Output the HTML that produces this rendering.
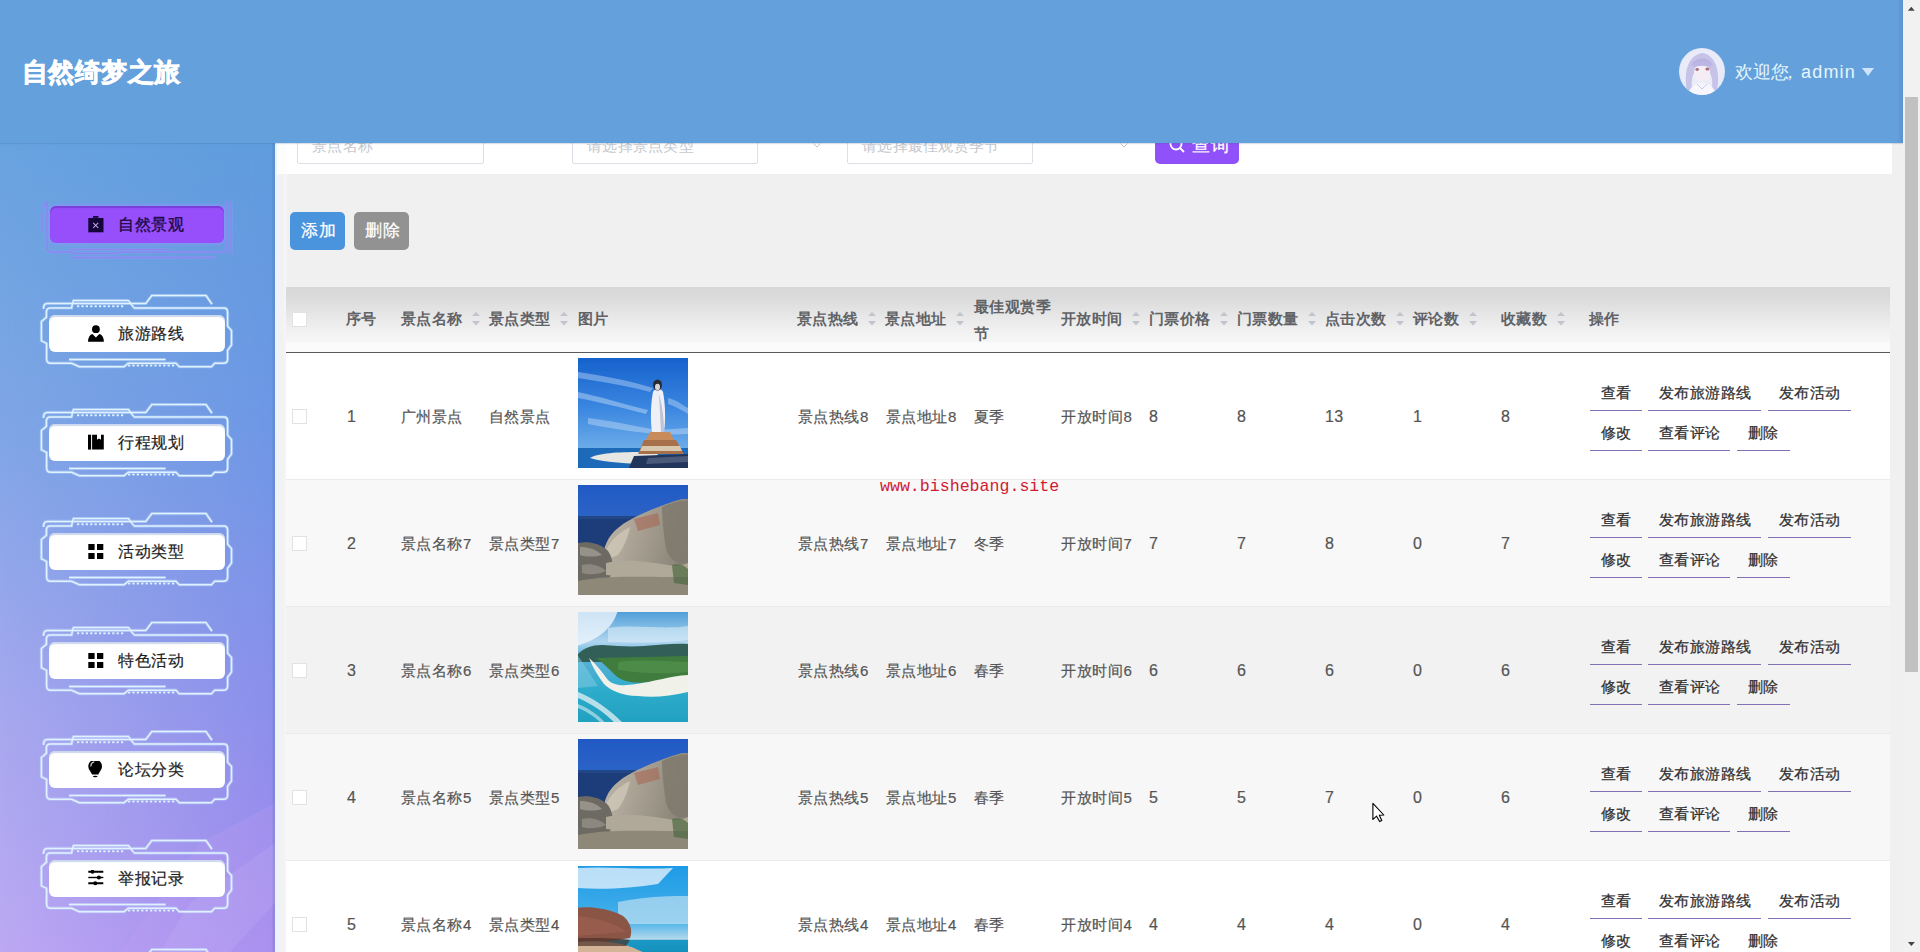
<!DOCTYPE html><html><head><meta charset="utf-8"><style>
*{box-sizing:border-box;margin:0;padding:0}
html,body{width:1920px;height:952px;overflow:hidden;background:#f0f0f0;font-family:"Liberation Sans",sans-serif}
.a{position:absolute}
#hdr{position:absolute;left:0;top:0;width:1903px;height:143px;background:#64a0dc;z-index:10;box-shadow:0 1px 1px rgba(60,100,150,.2)}
#title{position:absolute;left:22px;top:54px;font-size:26px;font-weight:700;-webkit-text-stroke:0.7px #fff;letter-spacing:0.4px;color:#fff;line-height:36px;white-space:nowrap}
#user{position:absolute;left:1735px;top:59px;font-size:18px;color:#e4f6fb;line-height:26px;white-space:nowrap}
#sb{position:absolute;left:1903px;top:0;width:17px;height:952px;background:#f1f1f1;z-index:11}
#side{position:absolute;left:0;top:143px;width:275px;height:809px;overflow:hidden}
#main{position:absolute;left:275px;top:143px;width:1628px;height:809px;background:#f0f0f0;overflow:hidden}
.c{position:absolute;font-size:15px;letter-spacing:0.6px;color:#555;white-space:nowrap;line-height:20px;-webkit-text-stroke:0.2px #555}
.h{position:absolute;font-size:15px;letter-spacing:0.4px;color:#606266;font-weight:bold;white-space:nowrap;line-height:20px}
.cb{position:absolute;width:15px;height:15px;border:1px solid #e2e2e2;background:#fff;border-radius:0}
.bt{position:absolute;font-size:15px;letter-spacing:0.4px;color:#303030;line-height:20px;white-space:nowrap;-webkit-text-stroke:0.25px #303030}
.ul{position:absolute;height:1.3px;background:#8370b4}
.mt{position:absolute;font-size:16px;letter-spacing:0.5px;color:#1e1e1e;line-height:22px;white-space:nowrap;-webkit-text-stroke:0.2px #1e1e1e}
</style></head><body>
<div id="hdr"><div class="a" style="left:1897px;top:0;width:6px;height:143px;background:linear-gradient(90deg,rgba(60,100,160,0),rgba(60,100,160,.22))"></div><div id="title">自然绮梦之旅</div>
<svg class="a" style="left:1679px;top:48px" width="46" height="47" viewBox="0 0 46 47">
<defs><clipPath id="avc"><ellipse cx="23" cy="23.5" rx="23" ry="23.5"/></clipPath>
<radialGradient id="avg" cx="50%" cy="45%" r="55%"><stop offset="0" stop-color="#f2f0fa"/><stop offset="0.85" stop-color="#e8eaf8"/><stop offset="1" stop-color="#dce8fa"/></radialGradient></defs>
<g clip-path="url(#avc)">
<rect width="46" height="47" fill="url(#avg)"/>
<path d="M8,42 C5,28 7,8 23,5 C39,7 41,28 38,42 L33,42 C34,32 33,22 23,18 C13,22 12,32 13,42Z" fill="#c6c2e8"/>
<path d="M12,18 C15,8 31,8 34,18 C30,14 16,14 12,18Z" fill="#b8b4e0"/>
<ellipse cx="23" cy="24" rx="8" ry="9.5" fill="#f4eef4"/>
<path d="M14,16 C18,13 28,13 32,17 L31,20 C27,17 19,17 15,20Z" fill="#bcb6e4"/>
<ellipse cx="18.2" cy="21.5" rx="1.8" ry="1.4" fill="#a87080"/><ellipse cx="28.4" cy="21" rx="2" ry="1.5" fill="#b06878"/>
<path d="M9,47 C11,38 17,35 23,35 C29,35 35,38 37,47Z" fill="#f6f6fc"/>
<path d="M18,36 L23,41 L28,36" stroke="#c8c4e6" stroke-width="0.9" fill="none"/>
</g></svg>
<div id="user">欢迎您</div><div id="user" style="left:1781px">，</div><div id="user" style="left:1801px;letter-spacing:1.2px">admin</div>
<svg class="a" style="left:1862px;top:68px" width="12" height="8"><path d="M0,0 L12,0 L6,8Z" fill="#cfe3fb"/></svg>
</div>
<div id="sb"><svg class="a" style="left:0;top:0" width="17" height="952"><path d="M4.9,10.8 L11.7,10.8 L8.3,6.8Z" fill="#454545"/><path d="M4.9,942 L11.9,942 L8.4,946Z" fill="#454545"/><rect x="2" y="97" width="13" height="575" fill="#c1c1c1"/></svg></div>
<div id="side">
<svg class="a" style="left:0;top:0" width="275" height="809">
<defs>
<linearGradient id="sgl" x1="0" y1="0" x2="0" y2="1">
<stop offset="0" stop-color="#68a3e0"/>
<stop offset="0.35" stop-color="#7fa6e6"/>
<stop offset="0.7" stop-color="#a6a8ee"/>
<stop offset="1" stop-color="#bca9f3"/>
</linearGradient>
<linearGradient id="sgr" x1="0" y1="0" x2="0" y2="1">
<stop offset="0" stop-color="#5f9cdd"/>
<stop offset="0.35" stop-color="#6e97e4"/>
<stop offset="0.7" stop-color="#8b8fea"/>
<stop offset="1" stop-color="#a48aee"/>
</linearGradient>
<linearGradient id="sgm" x1="0" y1="0" x2="1" y2="0">
<stop offset="0" stop-color="#fff" stop-opacity="0"/>
<stop offset="1" stop-color="#fff" stop-opacity="1"/>
</linearGradient>
<mask id="smask"><rect width="275" height="809" fill="url(#sgm)"/></mask>
</defs>
<rect width="275" height="809" fill="url(#sgl)"/>
<rect width="275" height="809" fill="url(#sgr)" mask="url(#smask)"/>
<path d="M120,809 L200,700 L275,660 L275,809Z" fill="#c0a0f4" opacity="0.25"/>
<rect x="272.5" y="0" width="2.5" height="809" fill="#3a5a90" opacity="0.16"/>
<path d="M190,760 L275,700 L275,760 L230,809 L160,809Z" fill="#ffffff" opacity="0.07"/>
</svg>
<svg class="a" style="left:38px;top:38.0px" width="200" height="82" viewBox="0 0 200 82" fill="none"><g stroke="#8f9cf6" stroke-width="3.2" opacity="0.45"><path d="M9,20 L9,66 Q9,71 14,71 L34,71 L36,72.5 L80,72.5 L82,71 L184,71 Q188.8,71 188.8,66 L188.8,20" /><path d="M3.9,32 L3.9,51 M3.5,27.5 L9,21.5" /><path d="M193.2,20 L193.2,74" /><path d="M34,76.5 L178,76.5" /><path d="M31,68.4 L130,68.4" /></g><g stroke="#8a86f2" stroke-width="1.4"><path d="M9,20 L9,66 Q9,71 14,71 L34,71 L36,72.5 L80,72.5 L82,71 L184,71 Q188.8,71 188.8,66 L188.8,20" /><path d="M3.9,32 L3.9,51 M3.5,27.5 L9,21.5" /><path d="M193.2,20 L193.2,74" /><path d="M34,76.5 L178,76.5" /><path d="M31,68.4 L130,68.4" /></g></svg>
<div class="a" style="left:50px;top:63.0px;width:174px;height:37px;background:#964ffa;border-radius:6px;box-shadow:inset 0 2px 1px #7a3ed8,0 0 3px 2px rgba(135,150,245,.75)"></div>
<svg class="a" style="left:88px;top:73.0px" width="16" height="17" viewBox="0 0 16 17"><path d="M5,-0.2 L10.4,-0.2 L10.4,1.8 L5,1.8Z" fill="#15063a"/><path d="M0.3,2 L15.5,2 L15.5,16.3 L0.3,16.3Z" fill="#15063a"/><path d="M5.2,6.8 L10.2,11.8 M10.2,6.8 L5.2,11.8" stroke="#b8a0e8" stroke-width="1.1"/></svg>
<div class="mt" style="left:118px;top:70.5px;color:#1c0845;-webkit-text-stroke:0.35px #1c0845">自然景观</div>
<svg class="a" style="left:38px;top:147.0px" width="200" height="82" viewBox="0 0 200 82" fill="none"><g stroke="#c8e6ff" stroke-width="3.2" opacity="0.35"><path d="M5.5,19 Q5.5,13.4 9.2,13.4 L107.8,13.4 L113.8,5.6 L168,5.6 L174,14.2" /><path d="M34.5,13.4 L35.5,10.6 L90.4,10.6 L95.6,17.4" /><path d="M34.5,13.4 L33.6,18 L12.4,18 Q8.4,18 8.4,22 L8.4,27.3 L3.4,31.5 L3.4,50.8 L8.6,53.4 L8.6,68.9 Q8.6,73.2 12.9,73.2 L33.6,73.2 L41.3,76.7 L86.1,76.7 L90.4,73.2 L137.9,73.2 L141.3,76.7 L173.5,76.7 L176.7,73.2 L185.3,73.2 Q189.6,73.2 189.6,68.9 L189.6,60.3 L193.5,55 L193.5,40.5 L189.6,36.2 L189.6,22.4 Q189.6,18.1 186,18.1 L96.5,18.1 L95.6,17.4" /><path d="M31,69.5 L127.6,69.5" /><path d="M39,16.2 L85.3,16.2" stroke-dasharray="2.2 2.2" /><path d="M90,75.4 L137,75.4" stroke-dasharray="2.2 2.2" /></g><g stroke="#e0f2ff" stroke-width="1.5"><path d="M5.5,19 Q5.5,13.4 9.2,13.4 L107.8,13.4 L113.8,5.6 L168,5.6 L174,14.2" /><path d="M34.5,13.4 L35.5,10.6 L90.4,10.6 L95.6,17.4" /><path d="M34.5,13.4 L33.6,18 L12.4,18 Q8.4,18 8.4,22 L8.4,27.3 L3.4,31.5 L3.4,50.8 L8.6,53.4 L8.6,68.9 Q8.6,73.2 12.9,73.2 L33.6,73.2 L41.3,76.7 L86.1,76.7 L90.4,73.2 L137.9,73.2 L141.3,76.7 L173.5,76.7 L176.7,73.2 L185.3,73.2 Q189.6,73.2 189.6,68.9 L189.6,60.3 L193.5,55 L193.5,40.5 L189.6,36.2 L189.6,22.4 Q189.6,18.1 186,18.1 L96.5,18.1 L95.6,17.4" /><path d="M31,69.5 L127.6,69.5" /><path d="M39,16.2 L85.3,16.2" stroke-dasharray="2.2 2.2" /><path d="M90,75.4 L137,75.4" stroke-dasharray="2.2 2.2" /></g></svg>
<div class="a" style="left:49px;top:172.0px;width:176px;height:37px;background:#fff;border-radius:6px;box-shadow:inset 0 2px 1px rgba(170,190,225,.6)"></div>
<svg class="a" style="left:88px;top:182.0px" width="16" height="17" viewBox="0 0 16 17"><circle cx="7.9" cy="4.2" r="3.9" fill="#000"/><path d="M0,16.7 Q0.3,10 4.5,9 L7.9,12.5 L11.3,9 Q15.6,10 15.9,16.7Z" fill="#000"/></svg>
<div class="mt" style="left:118px;top:179.5px">旅游路线</div>
<svg class="a" style="left:38px;top:256.0px" width="200" height="82" viewBox="0 0 200 82" fill="none"><g stroke="#c8e6ff" stroke-width="3.2" opacity="0.35"><path d="M5.5,19 Q5.5,13.4 9.2,13.4 L107.8,13.4 L113.8,5.6 L168,5.6 L174,14.2" /><path d="M34.5,13.4 L35.5,10.6 L90.4,10.6 L95.6,17.4" /><path d="M34.5,13.4 L33.6,18 L12.4,18 Q8.4,18 8.4,22 L8.4,27.3 L3.4,31.5 L3.4,50.8 L8.6,53.4 L8.6,68.9 Q8.6,73.2 12.9,73.2 L33.6,73.2 L41.3,76.7 L86.1,76.7 L90.4,73.2 L137.9,73.2 L141.3,76.7 L173.5,76.7 L176.7,73.2 L185.3,73.2 Q189.6,73.2 189.6,68.9 L189.6,60.3 L193.5,55 L193.5,40.5 L189.6,36.2 L189.6,22.4 Q189.6,18.1 186,18.1 L96.5,18.1 L95.6,17.4" /><path d="M31,69.5 L127.6,69.5" /><path d="M39,16.2 L85.3,16.2" stroke-dasharray="2.2 2.2" /><path d="M90,75.4 L137,75.4" stroke-dasharray="2.2 2.2" /></g><g stroke="#e0f2ff" stroke-width="1.5"><path d="M5.5,19 Q5.5,13.4 9.2,13.4 L107.8,13.4 L113.8,5.6 L168,5.6 L174,14.2" /><path d="M34.5,13.4 L35.5,10.6 L90.4,10.6 L95.6,17.4" /><path d="M34.5,13.4 L33.6,18 L12.4,18 Q8.4,18 8.4,22 L8.4,27.3 L3.4,31.5 L3.4,50.8 L8.6,53.4 L8.6,68.9 Q8.6,73.2 12.9,73.2 L33.6,73.2 L41.3,76.7 L86.1,76.7 L90.4,73.2 L137.9,73.2 L141.3,76.7 L173.5,76.7 L176.7,73.2 L185.3,73.2 Q189.6,73.2 189.6,68.9 L189.6,60.3 L193.5,55 L193.5,40.5 L189.6,36.2 L189.6,22.4 Q189.6,18.1 186,18.1 L96.5,18.1 L95.6,17.4" /><path d="M31,69.5 L127.6,69.5" /><path d="M39,16.2 L85.3,16.2" stroke-dasharray="2.2 2.2" /><path d="M90,75.4 L137,75.4" stroke-dasharray="2.2 2.2" /></g></svg>
<div class="a" style="left:49px;top:281.0px;width:176px;height:37px;background:#fff;border-radius:6px;box-shadow:inset 0 2px 1px rgba(170,190,225,.6)"></div>
<svg class="a" style="left:88px;top:291.0px" width="16" height="17" viewBox="0 0 16 17"><path d="M0,0.7 L3.1,0.7 L3.1,15.6 L0,15.6Z" fill="#000"/><path d="M4.1,0.7 L9,0.7 L9,5.7 L11,4.6 L13,5.7 L13,0.7 L15.8,0.7 L15.8,15.6 L4.1,15.6Z" fill="#000"/></svg>
<div class="mt" style="left:118px;top:288.5px">行程规划</div>
<svg class="a" style="left:38px;top:365.0px" width="200" height="82" viewBox="0 0 200 82" fill="none"><g stroke="#c8e6ff" stroke-width="3.2" opacity="0.35"><path d="M5.5,19 Q5.5,13.4 9.2,13.4 L107.8,13.4 L113.8,5.6 L168,5.6 L174,14.2" /><path d="M34.5,13.4 L35.5,10.6 L90.4,10.6 L95.6,17.4" /><path d="M34.5,13.4 L33.6,18 L12.4,18 Q8.4,18 8.4,22 L8.4,27.3 L3.4,31.5 L3.4,50.8 L8.6,53.4 L8.6,68.9 Q8.6,73.2 12.9,73.2 L33.6,73.2 L41.3,76.7 L86.1,76.7 L90.4,73.2 L137.9,73.2 L141.3,76.7 L173.5,76.7 L176.7,73.2 L185.3,73.2 Q189.6,73.2 189.6,68.9 L189.6,60.3 L193.5,55 L193.5,40.5 L189.6,36.2 L189.6,22.4 Q189.6,18.1 186,18.1 L96.5,18.1 L95.6,17.4" /><path d="M31,69.5 L127.6,69.5" /><path d="M39,16.2 L85.3,16.2" stroke-dasharray="2.2 2.2" /><path d="M90,75.4 L137,75.4" stroke-dasharray="2.2 2.2" /></g><g stroke="#e0f2ff" stroke-width="1.5"><path d="M5.5,19 Q5.5,13.4 9.2,13.4 L107.8,13.4 L113.8,5.6 L168,5.6 L174,14.2" /><path d="M34.5,13.4 L35.5,10.6 L90.4,10.6 L95.6,17.4" /><path d="M34.5,13.4 L33.6,18 L12.4,18 Q8.4,18 8.4,22 L8.4,27.3 L3.4,31.5 L3.4,50.8 L8.6,53.4 L8.6,68.9 Q8.6,73.2 12.9,73.2 L33.6,73.2 L41.3,76.7 L86.1,76.7 L90.4,73.2 L137.9,73.2 L141.3,76.7 L173.5,76.7 L176.7,73.2 L185.3,73.2 Q189.6,73.2 189.6,68.9 L189.6,60.3 L193.5,55 L193.5,40.5 L189.6,36.2 L189.6,22.4 Q189.6,18.1 186,18.1 L96.5,18.1 L95.6,17.4" /><path d="M31,69.5 L127.6,69.5" /><path d="M39,16.2 L85.3,16.2" stroke-dasharray="2.2 2.2" /><path d="M90,75.4 L137,75.4" stroke-dasharray="2.2 2.2" /></g></svg>
<div class="a" style="left:49px;top:390.0px;width:176px;height:37px;background:#fff;border-radius:6px;box-shadow:inset 0 2px 1px rgba(170,190,225,.6)"></div>
<svg class="a" style="left:88px;top:400.0px" width="16" height="17" viewBox="0 0 16 17"><rect x="0.3" y="1" width="6.3" height="6" fill="#000"/><rect x="9" y="1" width="6.3" height="6" fill="#000"/><rect x="0.3" y="10" width="6.3" height="6" fill="#000"/><rect x="9" y="10" width="6.3" height="6" fill="#000"/></svg>
<div class="mt" style="left:118px;top:397.5px">活动类型</div>
<svg class="a" style="left:38px;top:474.0px" width="200" height="82" viewBox="0 0 200 82" fill="none"><g stroke="#c8e6ff" stroke-width="3.2" opacity="0.35"><path d="M5.5,19 Q5.5,13.4 9.2,13.4 L107.8,13.4 L113.8,5.6 L168,5.6 L174,14.2" /><path d="M34.5,13.4 L35.5,10.6 L90.4,10.6 L95.6,17.4" /><path d="M34.5,13.4 L33.6,18 L12.4,18 Q8.4,18 8.4,22 L8.4,27.3 L3.4,31.5 L3.4,50.8 L8.6,53.4 L8.6,68.9 Q8.6,73.2 12.9,73.2 L33.6,73.2 L41.3,76.7 L86.1,76.7 L90.4,73.2 L137.9,73.2 L141.3,76.7 L173.5,76.7 L176.7,73.2 L185.3,73.2 Q189.6,73.2 189.6,68.9 L189.6,60.3 L193.5,55 L193.5,40.5 L189.6,36.2 L189.6,22.4 Q189.6,18.1 186,18.1 L96.5,18.1 L95.6,17.4" /><path d="M31,69.5 L127.6,69.5" /><path d="M39,16.2 L85.3,16.2" stroke-dasharray="2.2 2.2" /><path d="M90,75.4 L137,75.4" stroke-dasharray="2.2 2.2" /></g><g stroke="#e0f2ff" stroke-width="1.5"><path d="M5.5,19 Q5.5,13.4 9.2,13.4 L107.8,13.4 L113.8,5.6 L168,5.6 L174,14.2" /><path d="M34.5,13.4 L35.5,10.6 L90.4,10.6 L95.6,17.4" /><path d="M34.5,13.4 L33.6,18 L12.4,18 Q8.4,18 8.4,22 L8.4,27.3 L3.4,31.5 L3.4,50.8 L8.6,53.4 L8.6,68.9 Q8.6,73.2 12.9,73.2 L33.6,73.2 L41.3,76.7 L86.1,76.7 L90.4,73.2 L137.9,73.2 L141.3,76.7 L173.5,76.7 L176.7,73.2 L185.3,73.2 Q189.6,73.2 189.6,68.9 L189.6,60.3 L193.5,55 L193.5,40.5 L189.6,36.2 L189.6,22.4 Q189.6,18.1 186,18.1 L96.5,18.1 L95.6,17.4" /><path d="M31,69.5 L127.6,69.5" /><path d="M39,16.2 L85.3,16.2" stroke-dasharray="2.2 2.2" /><path d="M90,75.4 L137,75.4" stroke-dasharray="2.2 2.2" /></g></svg>
<div class="a" style="left:49px;top:499.0px;width:176px;height:37px;background:#fff;border-radius:6px;box-shadow:inset 0 2px 1px rgba(170,190,225,.6)"></div>
<svg class="a" style="left:88px;top:509.0px" width="16" height="17" viewBox="0 0 16 17"><rect x="0.3" y="1" width="6.3" height="6" fill="#000"/><rect x="9" y="1" width="6.3" height="6" fill="#000"/><rect x="0.3" y="10" width="6.3" height="6" fill="#000"/><rect x="9" y="10" width="6.3" height="6" fill="#000"/></svg>
<div class="mt" style="left:118px;top:506.5px">特色活动</div>
<svg class="a" style="left:38px;top:583.0px" width="200" height="82" viewBox="0 0 200 82" fill="none"><g stroke="#c8e6ff" stroke-width="3.2" opacity="0.35"><path d="M5.5,19 Q5.5,13.4 9.2,13.4 L107.8,13.4 L113.8,5.6 L168,5.6 L174,14.2" /><path d="M34.5,13.4 L35.5,10.6 L90.4,10.6 L95.6,17.4" /><path d="M34.5,13.4 L33.6,18 L12.4,18 Q8.4,18 8.4,22 L8.4,27.3 L3.4,31.5 L3.4,50.8 L8.6,53.4 L8.6,68.9 Q8.6,73.2 12.9,73.2 L33.6,73.2 L41.3,76.7 L86.1,76.7 L90.4,73.2 L137.9,73.2 L141.3,76.7 L173.5,76.7 L176.7,73.2 L185.3,73.2 Q189.6,73.2 189.6,68.9 L189.6,60.3 L193.5,55 L193.5,40.5 L189.6,36.2 L189.6,22.4 Q189.6,18.1 186,18.1 L96.5,18.1 L95.6,17.4" /><path d="M31,69.5 L127.6,69.5" /><path d="M39,16.2 L85.3,16.2" stroke-dasharray="2.2 2.2" /><path d="M90,75.4 L137,75.4" stroke-dasharray="2.2 2.2" /></g><g stroke="#e0f2ff" stroke-width="1.5"><path d="M5.5,19 Q5.5,13.4 9.2,13.4 L107.8,13.4 L113.8,5.6 L168,5.6 L174,14.2" /><path d="M34.5,13.4 L35.5,10.6 L90.4,10.6 L95.6,17.4" /><path d="M34.5,13.4 L33.6,18 L12.4,18 Q8.4,18 8.4,22 L8.4,27.3 L3.4,31.5 L3.4,50.8 L8.6,53.4 L8.6,68.9 Q8.6,73.2 12.9,73.2 L33.6,73.2 L41.3,76.7 L86.1,76.7 L90.4,73.2 L137.9,73.2 L141.3,76.7 L173.5,76.7 L176.7,73.2 L185.3,73.2 Q189.6,73.2 189.6,68.9 L189.6,60.3 L193.5,55 L193.5,40.5 L189.6,36.2 L189.6,22.4 Q189.6,18.1 186,18.1 L96.5,18.1 L95.6,17.4" /><path d="M31,69.5 L127.6,69.5" /><path d="M39,16.2 L85.3,16.2" stroke-dasharray="2.2 2.2" /><path d="M90,75.4 L137,75.4" stroke-dasharray="2.2 2.2" /></g></svg>
<div class="a" style="left:49px;top:608.0px;width:176px;height:37px;background:#fff;border-radius:6px;box-shadow:inset 0 2px 1px rgba(170,190,225,.6)"></div>
<svg class="a" style="left:88px;top:618.0px" width="16" height="17" viewBox="0 0 16 17"><path d="M7.2,-1.3 C11.2,-1.3 14,1.5 14,5.5 C14,8.8 11.5,10.5 10.3,13.6 L4.1,13.6 C2.9,10.5 0.3,8.8 0.3,5.5 C0.3,1.5 3.2,-1.3 7.2,-1.3Z" fill="#000"/><path d="M2.8,5.5 C2.8,3 4.3,1.2 6.3,0.8" stroke="#d8d8d8" stroke-width="1.2" fill="none"/><ellipse cx="7.2" cy="15.5" rx="2.3" ry="0.8" fill="#000"/></svg>
<div class="mt" style="left:118px;top:615.5px">论坛分类</div>
<svg class="a" style="left:38px;top:692.0px" width="200" height="82" viewBox="0 0 200 82" fill="none"><g stroke="#c8e6ff" stroke-width="3.2" opacity="0.35"><path d="M5.5,19 Q5.5,13.4 9.2,13.4 L107.8,13.4 L113.8,5.6 L168,5.6 L174,14.2" /><path d="M34.5,13.4 L35.5,10.6 L90.4,10.6 L95.6,17.4" /><path d="M34.5,13.4 L33.6,18 L12.4,18 Q8.4,18 8.4,22 L8.4,27.3 L3.4,31.5 L3.4,50.8 L8.6,53.4 L8.6,68.9 Q8.6,73.2 12.9,73.2 L33.6,73.2 L41.3,76.7 L86.1,76.7 L90.4,73.2 L137.9,73.2 L141.3,76.7 L173.5,76.7 L176.7,73.2 L185.3,73.2 Q189.6,73.2 189.6,68.9 L189.6,60.3 L193.5,55 L193.5,40.5 L189.6,36.2 L189.6,22.4 Q189.6,18.1 186,18.1 L96.5,18.1 L95.6,17.4" /><path d="M31,69.5 L127.6,69.5" /><path d="M39,16.2 L85.3,16.2" stroke-dasharray="2.2 2.2" /><path d="M90,75.4 L137,75.4" stroke-dasharray="2.2 2.2" /></g><g stroke="#e0f2ff" stroke-width="1.5"><path d="M5.5,19 Q5.5,13.4 9.2,13.4 L107.8,13.4 L113.8,5.6 L168,5.6 L174,14.2" /><path d="M34.5,13.4 L35.5,10.6 L90.4,10.6 L95.6,17.4" /><path d="M34.5,13.4 L33.6,18 L12.4,18 Q8.4,18 8.4,22 L8.4,27.3 L3.4,31.5 L3.4,50.8 L8.6,53.4 L8.6,68.9 Q8.6,73.2 12.9,73.2 L33.6,73.2 L41.3,76.7 L86.1,76.7 L90.4,73.2 L137.9,73.2 L141.3,76.7 L173.5,76.7 L176.7,73.2 L185.3,73.2 Q189.6,73.2 189.6,68.9 L189.6,60.3 L193.5,55 L193.5,40.5 L189.6,36.2 L189.6,22.4 Q189.6,18.1 186,18.1 L96.5,18.1 L95.6,17.4" /><path d="M31,69.5 L127.6,69.5" /><path d="M39,16.2 L85.3,16.2" stroke-dasharray="2.2 2.2" /><path d="M90,75.4 L137,75.4" stroke-dasharray="2.2 2.2" /></g></svg>
<div class="a" style="left:49px;top:717.0px;width:176px;height:37px;background:#fff;border-radius:6px;box-shadow:inset 0 2px 1px rgba(170,190,225,.6)"></div>
<svg class="a" style="left:88px;top:727.0px" width="16" height="17" viewBox="0 0 16 17"><path d="M0.3,1.8 L15.3,1.8 M0.3,13.2 L15.3,13.2" stroke="#000" stroke-width="1.9"/><path d="M0.3,7.5 L15.3,7.5" stroke="#000" stroke-width="1.4"/><circle cx="4.5" cy="1.8" r="2" fill="#000"/><circle cx="10.9" cy="7.5" r="2" fill="#000"/><circle cx="7.3" cy="13.2" r="2" fill="#000"/></svg>
<div class="mt" style="left:118px;top:724.5px">举报记录</div>
<svg class="a" style="left:38px;top:801.0px" width="200" height="82" viewBox="0 0 200 82" fill="none"><g stroke="#c8e6ff" stroke-width="3.2" opacity="0.35"><path d="M5.5,19 Q5.5,13.4 9.2,13.4 L107.8,13.4 L113.8,5.6 L168,5.6 L174,14.2" /><path d="M34.5,13.4 L35.5,10.6 L90.4,10.6 L95.6,17.4" /><path d="M34.5,13.4 L33.6,18 L12.4,18 Q8.4,18 8.4,22 L8.4,27.3 L3.4,31.5 L3.4,50.8 L8.6,53.4 L8.6,68.9 Q8.6,73.2 12.9,73.2 L33.6,73.2 L41.3,76.7 L86.1,76.7 L90.4,73.2 L137.9,73.2 L141.3,76.7 L173.5,76.7 L176.7,73.2 L185.3,73.2 Q189.6,73.2 189.6,68.9 L189.6,60.3 L193.5,55 L193.5,40.5 L189.6,36.2 L189.6,22.4 Q189.6,18.1 186,18.1 L96.5,18.1 L95.6,17.4" /><path d="M31,69.5 L127.6,69.5" /><path d="M39,16.2 L85.3,16.2" stroke-dasharray="2.2 2.2" /><path d="M90,75.4 L137,75.4" stroke-dasharray="2.2 2.2" /></g><g stroke="#e0f2ff" stroke-width="1.5"><path d="M5.5,19 Q5.5,13.4 9.2,13.4 L107.8,13.4 L113.8,5.6 L168,5.6 L174,14.2" /><path d="M34.5,13.4 L35.5,10.6 L90.4,10.6 L95.6,17.4" /><path d="M34.5,13.4 L33.6,18 L12.4,18 Q8.4,18 8.4,22 L8.4,27.3 L3.4,31.5 L3.4,50.8 L8.6,53.4 L8.6,68.9 Q8.6,73.2 12.9,73.2 L33.6,73.2 L41.3,76.7 L86.1,76.7 L90.4,73.2 L137.9,73.2 L141.3,76.7 L173.5,76.7 L176.7,73.2 L185.3,73.2 Q189.6,73.2 189.6,68.9 L189.6,60.3 L193.5,55 L193.5,40.5 L189.6,36.2 L189.6,22.4 Q189.6,18.1 186,18.1 L96.5,18.1 L95.6,17.4" /><path d="M31,69.5 L127.6,69.5" /><path d="M39,16.2 L85.3,16.2" stroke-dasharray="2.2 2.2" /><path d="M90,75.4 L137,75.4" stroke-dasharray="2.2 2.2" /></g></svg>
<div class="a" style="left:49px;top:826.0px;width:176px;height:37px;background:#fff;border-radius:6px;box-shadow:inset 0 2px 1px rgba(170,190,225,.6)"></div>
<svg class="a" style="left:88px;top:836.0px" width="16" height="17" viewBox="0 0 16 17"><rect x="0.3" y="1" width="6.3" height="6" fill="#000"/><rect x="9" y="1" width="6.3" height="6" fill="#000"/><rect x="0.3" y="10" width="6.3" height="6" fill="#000"/><rect x="9" y="10" width="6.3" height="6" fill="#000"/></svg>
<div class="mt" style="left:118px;top:833.5px">景点热线</div>
</div>
<div id="main">
<div class="a" style="left:0;top:0;width:12px;height:809px;background:linear-gradient(90deg,#f0f2f6,#f2f2f4 60%,#f6f6f7)"></div>
<div class="a" style="left:0;top:0;width:12px;height:31px;background:#fdfdfe"></div>
<div class="a" style="left:0;top:0;width:1.5px;height:809px;background:#eaf4ff"></div>
<div class="a" style="left:12px;top:0;width:1605px;height:31px;background:#fff"></div>
<div class="a" style="left:22px;top:-20px;width:187px;height:41px;border:1px solid #dcdfe6;border-radius:2px"></div>
<div class="c" style="left:37px;top:-7px;color:#c4c8ce;-webkit-text-stroke:0;letter-spacing:0.3px">景点名称</div>
<div class="a" style="left:297px;top:-20px;width:186px;height:41px;border:1px solid #dcdfe6;border-radius:2px"></div>
<div class="c" style="left:312px;top:-7px;color:#c4c8ce;-webkit-text-stroke:0;letter-spacing:0.3px">请选择景点类型</div>
<div class="a" style="left:572px;top:-20px;width:186px;height:41px;border:1px solid #dcdfe6;border-radius:2px"></div>
<div class="c" style="left:587px;top:-7px;color:#c4c8ce;-webkit-text-stroke:0;letter-spacing:0.3px">请选择最佳观赏季节</div>
<svg class="a" style="left:538px;top:0px" width="8" height="5"><path d="M0.5,0.5 L4,4 L7.5,0.5" stroke="#c0c4cc" stroke-width="1" fill="none"/></svg>
<svg class="a" style="left:845px;top:0px" width="8" height="5"><path d="M0.5,0.5 L4,4 L7.5,0.5" stroke="#c0c4cc" stroke-width="1" fill="none"/></svg>
<div class="a" style="left:880px;top:-20px;width:84px;height:41px;background:#9050fa;border-radius:5px"></div>
<svg class="a" style="left:894px;top:-6px" width="17" height="16" viewBox="0 0 17 16"><circle cx="7" cy="7" r="5.5" stroke="#fff" stroke-width="1.8" fill="none"/><path d="M11,11 L15,15" stroke="#fff" stroke-width="1.8"/></svg>
<div class="c" style="left:917px;top:-9px;color:#fff;font-size:17.5px;line-height:22px;-webkit-text-stroke:0.3px #fff">查询</div>
<div class="a" style="left:15px;top:69px;width:55px;height:38px;background:#4a93dd;border-radius:5px"></div>
<div class="c" style="left:26px;top:76px;color:#fff;font-size:17px;line-height:24px;-webkit-text-stroke:0.25px #fff">添加</div>
<div class="a" style="left:79px;top:69px;width:55px;height:38px;background:#929292;border-radius:5px"></div>
<div class="c" style="left:90px;top:76px;color:#fff;font-size:17px;line-height:24px;-webkit-text-stroke:0.25px #fff">删除</div>
<div class="a" style="left:11px;top:144px;width:1604px;height:65px;background:linear-gradient(#d8d8d8 0%,#dadada 14%,#e6e6e6 42%,#f2f2f2 70%,#f6f6f6 85%,#fbfbfb 86%,#fbfbfb 100%)"></div>
<div class="a" style="left:11px;top:209px;width:1604px;height:1px;background:#5a5a5a"></div>
<div class="cb" style="left:17px;top:169px"></div>
<div class="h" style="left:71px;top:166px">序号</div>
<div class="h" style="left:126px;top:166px">景点名称</div>
<svg class="a" style="left:197px;top:169px" width="8" height="14" viewBox="0 0 8 14"><path d="M0,4 L4,0 L8,4Z" fill="#c0c4cc"/><path d="M0,9 L8,9 L4,13.5Z" fill="#c0c4cc"/></svg>
<div class="h" style="left:214px;top:166px">景点类型</div>
<svg class="a" style="left:285px;top:169px" width="8" height="14" viewBox="0 0 8 14"><path d="M0,4 L4,0 L8,4Z" fill="#c0c4cc"/><path d="M0,9 L8,9 L4,13.5Z" fill="#c0c4cc"/></svg>
<div class="h" style="left:303px;top:166px">图片</div>
<div class="h" style="left:522px;top:166px">景点热线</div>
<svg class="a" style="left:593px;top:169px" width="8" height="14" viewBox="0 0 8 14"><path d="M0,4 L4,0 L8,4Z" fill="#c0c4cc"/><path d="M0,9 L8,9 L4,13.5Z" fill="#c0c4cc"/></svg>
<div class="h" style="left:610px;top:166px">景点地址</div>
<svg class="a" style="left:681px;top:169px" width="8" height="14" viewBox="0 0 8 14"><path d="M0,4 L4,0 L8,4Z" fill="#c0c4cc"/><path d="M0,9 L8,9 L4,13.5Z" fill="#c0c4cc"/></svg>
<div class="h" style="left:786px;top:166px">开放时间</div>
<svg class="a" style="left:857px;top:169px" width="8" height="14" viewBox="0 0 8 14"><path d="M0,4 L4,0 L8,4Z" fill="#c0c4cc"/><path d="M0,9 L8,9 L4,13.5Z" fill="#c0c4cc"/></svg>
<div class="h" style="left:874px;top:166px">门票价格</div>
<svg class="a" style="left:945px;top:169px" width="8" height="14" viewBox="0 0 8 14"><path d="M0,4 L4,0 L8,4Z" fill="#c0c4cc"/><path d="M0,9 L8,9 L4,13.5Z" fill="#c0c4cc"/></svg>
<div class="h" style="left:962px;top:166px">门票数量</div>
<svg class="a" style="left:1033px;top:169px" width="8" height="14" viewBox="0 0 8 14"><path d="M0,4 L4,0 L8,4Z" fill="#c0c4cc"/><path d="M0,9 L8,9 L4,13.5Z" fill="#c0c4cc"/></svg>
<div class="h" style="left:1050px;top:166px">点击次数</div>
<svg class="a" style="left:1121px;top:169px" width="8" height="14" viewBox="0 0 8 14"><path d="M0,4 L4,0 L8,4Z" fill="#c0c4cc"/><path d="M0,9 L8,9 L4,13.5Z" fill="#c0c4cc"/></svg>
<div class="h" style="left:1138px;top:166px">评论数</div>
<svg class="a" style="left:1194px;top:169px" width="8" height="14" viewBox="0 0 8 14"><path d="M0,4 L4,0 L8,4Z" fill="#c0c4cc"/><path d="M0,9 L8,9 L4,13.5Z" fill="#c0c4cc"/></svg>
<div class="h" style="left:1226px;top:166px">收藏数</div>
<svg class="a" style="left:1282px;top:169px" width="8" height="14" viewBox="0 0 8 14"><path d="M0,4 L4,0 L8,4Z" fill="#c0c4cc"/><path d="M0,9 L8,9 L4,13.5Z" fill="#c0c4cc"/></svg>
<div class="h" style="left:1314px;top:166px">操作</div>
<div class="h" style="left:699px;top:153.8px">最佳观赏季</div>
<div class="h" style="left:699px;top:180.5px">节</div>
<div class="a" style="left:11px;top:210px;width:1604px;height:127px;background:#ffffff;border-bottom:1px solid #ebebeb"></div>
<div class="cb" style="left:17px;top:266.0px"></div>
<div class="c" style="left:72px;top:263.5px;font-size:16px;letter-spacing:0.3px">1</div>
<div class="c" style="left:125.5px;top:263.5px">广州景点</div>
<div class="c" style="left:213.5px;top:263.5px">自然景点</div>
<div class="c" style="left:522.5px;top:263.5px">景点热线8</div>
<div class="c" style="left:610.5px;top:263.5px">景点地址8</div>
<div class="c" style="left:698.5px;top:263.5px">夏季</div>
<div class="c" style="left:786px;top:263.5px">开放时间8</div>
<div class="c" style="left:874px;top:263.5px;font-size:16px;letter-spacing:0.3px">8</div>
<div class="c" style="left:962px;top:263.5px;font-size:16px;letter-spacing:0.3px">8</div>
<div class="c" style="left:1050px;top:263.5px;font-size:16px;letter-spacing:0.3px">13</div>
<div class="c" style="left:1138px;top:263.5px;font-size:16px;letter-spacing:0.3px">1</div>
<div class="c" style="left:1226px;top:263.5px;font-size:16px;letter-spacing:0.3px">8</div>
<svg class="a" style="left:303px;top:215px" width="110" height="110" viewBox="0 0 110 110"><defs><filter id="blguanyin358"><feGaussianBlur stdDeviation="0.7"/></filter></defs><g filter="url(#blguanyin358)"><defs><linearGradient id="gy" x1="0" y1="0" x2="0" y2="1"><stop offset="0" stop-color="#1460cc"/><stop offset="0.45" stop-color="#3a86e0"/><stop offset="0.8" stop-color="#6aaae8"/><stop offset="1" stop-color="#80b8ec"/></linearGradient></defs><rect x="-2" y="-2" width="114" height="114" fill="url(#gy)"/><path d="M0,14 C25,18 50,22 75,30 L72,34 C50,28 25,24 0,20Z" fill="#cfe4fa" opacity="0.4"/><path d="M0,34 C20,38 45,46 70,52 L68,56 C45,50 20,44 0,40Z" fill="#dcecfa" opacity="0.4"/><path d="M10,60 C30,62 55,68 80,72 L110,70 L110,76 C80,78 40,72 10,66Z" fill="#e4f0fb" opacity="0.35"/><path d="M90,40 C100,42 105,48 110,50 L110,56 C104,52 96,48 90,46Z" fill="#e4f0fb" opacity="0.35"/><rect x="-2" y="90" width="114" height="22" fill="#1f6ab8"/><path d="M12,100 C20,95 40,94 62,94 L80,96 L76,106 C50,106 25,104 12,100Z" fill="#e6e6e2"/><path d="M60,96 L66,82 L98,82 L106,96Z" fill="#a8704a"/><path d="M68,82 L72,74 L92,74 L96,82Z" fill="#c88c5c"/><path d="M64,88 L102,88 L104,93 L62,93Z" fill="#d8c8b0"/><path d="M74,74 C72,60 73,44 75,34 C76,30 84,30 85,34 C87,44 88,60 86,74Z" fill="#eef0f6"/><path d="M81,36 C84,46 86,60 86,74 L83,74Z" fill="#a8b0c4" opacity="0.7"/><ellipse cx="79.5" cy="27" rx="4.5" ry="5.5" fill="#2a2a34"/><ellipse cx="79.5" cy="29" rx="2.5" ry="3.2" fill="#d8d4d0"/><path d="M56,98 L110,96 L110,112 L50,112Z" fill="#23365a"/><path d="M70,100 L110,98 L110,104 L68,106Z" fill="#5a6a88" opacity="0.7"/></g></svg>
<div class="bt" style="left:1326px;top:239.60000000000002px">查看</div>
<div class="ul" style="left:1315px;top:266.9px;width:52px"></div>
<div class="bt" style="left:1384px;top:239.60000000000002px">发布旅游路线</div>
<div class="ul" style="left:1373px;top:266.9px;width:113px"></div>
<div class="bt" style="left:1504px;top:239.60000000000002px">发布活动</div>
<div class="ul" style="left:1493px;top:266.9px;width:83px"></div>
<div class="bt" style="left:1326px;top:280.4px">修改</div>
<div class="ul" style="left:1315px;top:306.9px;width:52px"></div>
<div class="bt" style="left:1384px;top:280.4px">查看评论</div>
<div class="ul" style="left:1373px;top:306.9px;width:82px"></div>
<div class="bt" style="left:1473px;top:280.4px">删除</div>
<div class="ul" style="left:1462px;top:306.9px;width:53px"></div>
<div class="a" style="left:11px;top:337px;width:1604px;height:127px;background:#f8f8f8;border-bottom:1px solid #ebebeb"></div>
<div class="cb" style="left:17px;top:393.0px"></div>
<div class="c" style="left:72px;top:390.5px;font-size:16px;letter-spacing:0.3px">2</div>
<div class="c" style="left:125.5px;top:390.5px">景点名称7</div>
<div class="c" style="left:213.5px;top:390.5px">景点类型7</div>
<div class="c" style="left:522.5px;top:390.5px">景点热线7</div>
<div class="c" style="left:610.5px;top:390.5px">景点地址7</div>
<div class="c" style="left:698.5px;top:390.5px">冬季</div>
<div class="c" style="left:786px;top:390.5px">开放时间7</div>
<div class="c" style="left:874px;top:390.5px;font-size:16px;letter-spacing:0.3px">7</div>
<div class="c" style="left:962px;top:390.5px;font-size:16px;letter-spacing:0.3px">7</div>
<div class="c" style="left:1050px;top:390.5px;font-size:16px;letter-spacing:0.3px">8</div>
<div class="c" style="left:1138px;top:390.5px;font-size:16px;letter-spacing:0.3px">0</div>
<div class="c" style="left:1226px;top:390.5px;font-size:16px;letter-spacing:0.3px">7</div>
<svg class="a" style="left:303px;top:342px" width="110" height="110" viewBox="0 0 110 110"><defs><filter id="blrock485"><feGaussianBlur stdDeviation="0.7"/></filter></defs><g filter="url(#blrock485)"><defs><linearGradient id="rk" x1="0" y1="0" x2="0" y2="1"><stop offset="0" stop-color="#2058c4"/><stop offset="1" stop-color="#4a80cc"/></linearGradient><linearGradient id="rk2" x1="0" y1="0" x2="1" y2="0.3"><stop offset="0" stop-color="#c4bcae"/><stop offset="0.6" stop-color="#a39c8e"/><stop offset="1" stop-color="#8a8478"/></linearGradient></defs><rect x="-2" y="-2" width="114" height="114" fill="url(#rk)"/><rect x="-2" y="31" width="114" height="40" fill="#1d3c7a"/><path d="M0,31 L110,31 L110,34 L0,34Z" fill="#2a4e90" opacity="0.6"/><path d="M26,66 C28,54 36,44 50,36 C66,27 86,19 104,14 L110,14 L110,112 L20,112 L20,80Z" fill="url(#rk2)"/><path d="M28,66 C32,56 40,48 52,42 C50,52 46,62 40,70 L30,74Z" fill="#d8d0c0" opacity="0.6"/><path d="M84,22 C96,16 106,15 110,16 L110,78 C100,80 92,76 88,64 C86,50 84,36 84,22Z" fill="#7e786c" opacity="0.8"/><path d="M56,34 L80,28 L82,40 L60,46Z" fill="#a86050" opacity="0.55"/><path d="M0,58 C10,56 22,58 30,66 C36,74 36,86 30,96 L0,100Z" fill="#6c6a62"/><path d="M2,62 C10,62 18,64 24,70 C18,72 8,72 2,70Z" fill="#a8a49a" opacity="0.7"/><path d="M4,80 C12,78 22,80 28,86 C20,90 10,90 4,88Z" fill="#9a968c" opacity="0.7"/><path d="M28,78 C45,74 65,76 90,80 C100,82 106,80 110,78 L110,96 C80,94 50,92 28,90Z" fill="#b0a898"/><path d="M0,96 C30,90 60,92 110,92 L110,112 L0,112Z" fill="#8e8878"/><path d="M94,80 C100,78 106,80 110,84 L110,100 L96,98Z" fill="#4e6a40" opacity="0.7"/></g></svg>
<div class="bt" style="left:1326px;top:366.6px">查看</div>
<div class="ul" style="left:1315px;top:393.9px;width:52px"></div>
<div class="bt" style="left:1384px;top:366.6px">发布旅游路线</div>
<div class="ul" style="left:1373px;top:393.9px;width:113px"></div>
<div class="bt" style="left:1504px;top:366.6px">发布活动</div>
<div class="ul" style="left:1493px;top:393.9px;width:83px"></div>
<div class="bt" style="left:1326px;top:407.4px">修改</div>
<div class="ul" style="left:1315px;top:433.9px;width:52px"></div>
<div class="bt" style="left:1384px;top:407.4px">查看评论</div>
<div class="ul" style="left:1373px;top:433.9px;width:82px"></div>
<div class="bt" style="left:1473px;top:407.4px">删除</div>
<div class="ul" style="left:1462px;top:433.9px;width:53px"></div>
<div class="a" style="left:11px;top:464px;width:1604px;height:127px;background:#f2f2f2;border-bottom:1px solid #ebebeb"></div>
<div class="cb" style="left:17px;top:520.0px"></div>
<div class="c" style="left:72px;top:517.5px;font-size:16px;letter-spacing:0.3px">3</div>
<div class="c" style="left:125.5px;top:517.5px">景点名称6</div>
<div class="c" style="left:213.5px;top:517.5px">景点类型6</div>
<div class="c" style="left:522.5px;top:517.5px">景点热线6</div>
<div class="c" style="left:610.5px;top:517.5px">景点地址6</div>
<div class="c" style="left:698.5px;top:517.5px">春季</div>
<div class="c" style="left:786px;top:517.5px">开放时间6</div>
<div class="c" style="left:874px;top:517.5px;font-size:16px;letter-spacing:0.3px">6</div>
<div class="c" style="left:962px;top:517.5px;font-size:16px;letter-spacing:0.3px">6</div>
<div class="c" style="left:1050px;top:517.5px;font-size:16px;letter-spacing:0.3px">6</div>
<div class="c" style="left:1138px;top:517.5px;font-size:16px;letter-spacing:0.3px">0</div>
<div class="c" style="left:1226px;top:517.5px;font-size:16px;letter-spacing:0.3px">6</div>
<svg class="a" style="left:303px;top:469px" width="110" height="110" viewBox="0 0 110 110"><defs><filter id="blisland612"><feGaussianBlur stdDeviation="0.7"/></filter></defs><g filter="url(#blisland612)"><defs><linearGradient id="il" x1="0" y1="0" x2="0" y2="1"><stop offset="0" stop-color="#4a9cd8"/><stop offset="0.28" stop-color="#b0d6f0"/><stop offset="0.4" stop-color="#60b0d8"/><stop offset="0.7" stop-color="#2eaccb"/><stop offset="1" stop-color="#22a0c0"/></linearGradient></defs><rect x="-2" y="-2" width="114" height="114" fill="url(#il)"/><path d="M-2,-2 L40,-2 C36,12 26,26 -2,34Z" fill="#eef5fb" opacity="0.8"/><path d="M30,16 C55,12 85,18 110,14 L110,28 C80,32 50,30 30,30Z" fill="#e0f0f8" opacity="0.55"/><path d="M0,42 C6,36 14,33 24,33 C40,34 52,35 66,34 C82,33 96,31 110,32 L110,50 L0,50Z" fill="#335f58"/><path d="M18,46 L110,44 L110,64 C98,64 86,68 72,70 C56,72 44,70 36,62 C30,56 24,50 18,46Z" fill="#3f7c3e"/><path d="M40,50 C60,47 85,49 110,50 L110,60 C90,62 65,62 40,58Z" fill="#5a9850" opacity="0.55"/><path d="M11,46 C18,52 24,60 30,68 C36,74 46,74 58,72 C74,70 92,64 110,63 L110,80 C92,84 76,86 60,84 C44,84 32,78 26,72 C20,64 15,56 11,46Z" fill="#f0f2ea"/><path d="M0,44 C6,52 12,62 20,74 L0,76Z" fill="#7ccbe0" opacity="0.55"/><path d="M0,80 C15,86 30,96 46,112 L38,112 C26,100 14,92 0,86Z" fill="#e6f2f6" opacity="0.75"/><path d="M0,92 C12,97 22,104 28,112 L24,112 C18,106 10,100 0,96Z" fill="#e6f2f6" opacity="0.55"/></g></svg>
<div class="bt" style="left:1326px;top:493.6px">查看</div>
<div class="ul" style="left:1315px;top:520.9px;width:52px"></div>
<div class="bt" style="left:1384px;top:493.6px">发布旅游路线</div>
<div class="ul" style="left:1373px;top:520.9px;width:113px"></div>
<div class="bt" style="left:1504px;top:493.6px">发布活动</div>
<div class="ul" style="left:1493px;top:520.9px;width:83px"></div>
<div class="bt" style="left:1326px;top:534.4px">修改</div>
<div class="ul" style="left:1315px;top:560.9px;width:52px"></div>
<div class="bt" style="left:1384px;top:534.4px">查看评论</div>
<div class="ul" style="left:1373px;top:560.9px;width:82px"></div>
<div class="bt" style="left:1473px;top:534.4px">删除</div>
<div class="ul" style="left:1462px;top:560.9px;width:53px"></div>
<div class="a" style="left:11px;top:591px;width:1604px;height:127px;background:#f7f7f7;border-bottom:1px solid #ebebeb"></div>
<div class="cb" style="left:17px;top:647.0px"></div>
<div class="c" style="left:72px;top:644.5px;font-size:16px;letter-spacing:0.3px">4</div>
<div class="c" style="left:125.5px;top:644.5px">景点名称5</div>
<div class="c" style="left:213.5px;top:644.5px">景点类型5</div>
<div class="c" style="left:522.5px;top:644.5px">景点热线5</div>
<div class="c" style="left:610.5px;top:644.5px">景点地址5</div>
<div class="c" style="left:698.5px;top:644.5px">春季</div>
<div class="c" style="left:786px;top:644.5px">开放时间5</div>
<div class="c" style="left:874px;top:644.5px;font-size:16px;letter-spacing:0.3px">5</div>
<div class="c" style="left:962px;top:644.5px;font-size:16px;letter-spacing:0.3px">5</div>
<div class="c" style="left:1050px;top:644.5px;font-size:16px;letter-spacing:0.3px">7</div>
<div class="c" style="left:1138px;top:644.5px;font-size:16px;letter-spacing:0.3px">0</div>
<div class="c" style="left:1226px;top:644.5px;font-size:16px;letter-spacing:0.3px">6</div>
<svg class="a" style="left:303px;top:596px" width="110" height="110" viewBox="0 0 110 110"><defs><filter id="blrock739"><feGaussianBlur stdDeviation="0.7"/></filter></defs><g filter="url(#blrock739)"><defs><linearGradient id="rk" x1="0" y1="0" x2="0" y2="1"><stop offset="0" stop-color="#2058c4"/><stop offset="1" stop-color="#4a80cc"/></linearGradient><linearGradient id="rk2" x1="0" y1="0" x2="1" y2="0.3"><stop offset="0" stop-color="#c4bcae"/><stop offset="0.6" stop-color="#a39c8e"/><stop offset="1" stop-color="#8a8478"/></linearGradient></defs><rect x="-2" y="-2" width="114" height="114" fill="url(#rk)"/><rect x="-2" y="31" width="114" height="40" fill="#1d3c7a"/><path d="M0,31 L110,31 L110,34 L0,34Z" fill="#2a4e90" opacity="0.6"/><path d="M26,66 C28,54 36,44 50,36 C66,27 86,19 104,14 L110,14 L110,112 L20,112 L20,80Z" fill="url(#rk2)"/><path d="M28,66 C32,56 40,48 52,42 C50,52 46,62 40,70 L30,74Z" fill="#d8d0c0" opacity="0.6"/><path d="M84,22 C96,16 106,15 110,16 L110,78 C100,80 92,76 88,64 C86,50 84,36 84,22Z" fill="#7e786c" opacity="0.8"/><path d="M56,34 L80,28 L82,40 L60,46Z" fill="#a86050" opacity="0.55"/><path d="M0,58 C10,56 22,58 30,66 C36,74 36,86 30,96 L0,100Z" fill="#6c6a62"/><path d="M2,62 C10,62 18,64 24,70 C18,72 8,72 2,70Z" fill="#a8a49a" opacity="0.7"/><path d="M4,80 C12,78 22,80 28,86 C20,90 10,90 4,88Z" fill="#9a968c" opacity="0.7"/><path d="M28,78 C45,74 65,76 90,80 C100,82 106,80 110,78 L110,96 C80,94 50,92 28,90Z" fill="#b0a898"/><path d="M0,96 C30,90 60,92 110,92 L110,112 L0,112Z" fill="#8e8878"/><path d="M94,80 C100,78 106,80 110,84 L110,100 L96,98Z" fill="#4e6a40" opacity="0.7"/></g></svg>
<div class="bt" style="left:1326px;top:620.6px">查看</div>
<div class="ul" style="left:1315px;top:647.9px;width:52px"></div>
<div class="bt" style="left:1384px;top:620.6px">发布旅游路线</div>
<div class="ul" style="left:1373px;top:647.9px;width:113px"></div>
<div class="bt" style="left:1504px;top:620.6px">发布活动</div>
<div class="ul" style="left:1493px;top:647.9px;width:83px"></div>
<div class="bt" style="left:1326px;top:661.4px">修改</div>
<div class="ul" style="left:1315px;top:687.9px;width:52px"></div>
<div class="bt" style="left:1384px;top:661.4px">查看评论</div>
<div class="ul" style="left:1373px;top:687.9px;width:82px"></div>
<div class="bt" style="left:1473px;top:661.4px">删除</div>
<div class="ul" style="left:1462px;top:687.9px;width:53px"></div>
<div class="a" style="left:11px;top:718px;width:1604px;height:127px;background:#ffffff;border-bottom:1px solid #ebebeb"></div>
<div class="cb" style="left:17px;top:774.0px"></div>
<div class="c" style="left:72px;top:771.5px;font-size:16px;letter-spacing:0.3px">5</div>
<div class="c" style="left:125.5px;top:771.5px">景点名称4</div>
<div class="c" style="left:213.5px;top:771.5px">景点类型4</div>
<div class="c" style="left:522.5px;top:771.5px">景点热线4</div>
<div class="c" style="left:610.5px;top:771.5px">景点地址4</div>
<div class="c" style="left:698.5px;top:771.5px">春季</div>
<div class="c" style="left:786px;top:771.5px">开放时间4</div>
<div class="c" style="left:874px;top:771.5px;font-size:16px;letter-spacing:0.3px">4</div>
<div class="c" style="left:962px;top:771.5px;font-size:16px;letter-spacing:0.3px">4</div>
<div class="c" style="left:1050px;top:771.5px;font-size:16px;letter-spacing:0.3px">4</div>
<div class="c" style="left:1138px;top:771.5px;font-size:16px;letter-spacing:0.3px">0</div>
<div class="c" style="left:1226px;top:771.5px;font-size:16px;letter-spacing:0.3px">4</div>
<svg class="a" style="left:303px;top:723px" width="110" height="86" viewBox="0 0 110 86"><defs><filter id="blcliff866"><feGaussianBlur stdDeviation="0.7"/></filter></defs><g filter="url(#blcliff866)"><defs><linearGradient id="cf" x1="0" y1="0" x2="0" y2="1"><stop offset="0" stop-color="#1c9ae6"/><stop offset="0.5" stop-color="#46b0ea"/><stop offset="0.66" stop-color="#b4d8ec"/><stop offset="0.67" stop-color="#1a98c4"/><stop offset="1" stop-color="#1482b0"/></linearGradient></defs><rect x="-2" y="-2" width="114" height="114" fill="url(#cf)"/><path d="M0,2 C30,0 60,4 95,2 L80,18 C55,22 25,24 0,22Z" fill="#eef6fc" opacity="0.75"/><path d="M40,36 C70,30 95,30 110,30 L110,58 L40,58Z" fill="#d4e8f2" opacity="0.6"/><path d="M-2,42 C10,40 30,42 45,50 C52,56 55,64 52,72 L0,80Z" fill="#8a5444"/><path d="M0,50 C20,52 40,58 48,66 L0,70Z" fill="#a06050" opacity="0.6"/><path d="M-2,76 C20,74 45,76 60,84 C75,90 90,100 110,110 L110,112 L-2,112Z" fill="#d4b496"/><path d="M0,72 C20,72 40,72 52,74 L48,80 C30,80 12,80 0,80Z" fill="#4a3028" opacity="0.7"/></g></svg>
<div class="bt" style="left:1326px;top:747.6px">查看</div>
<div class="ul" style="left:1315px;top:774.9px;width:52px"></div>
<div class="bt" style="left:1384px;top:747.6px">发布旅游路线</div>
<div class="ul" style="left:1373px;top:774.9px;width:113px"></div>
<div class="bt" style="left:1504px;top:747.6px">发布活动</div>
<div class="ul" style="left:1493px;top:774.9px;width:83px"></div>
<div class="bt" style="left:1326px;top:788.4px">修改</div>
<div class="ul" style="left:1315px;top:814.9px;width:52px"></div>
<div class="bt" style="left:1384px;top:788.4px">查看评论</div>
<div class="ul" style="left:1373px;top:814.9px;width:82px"></div>
<div class="bt" style="left:1473px;top:788.4px">删除</div>
<div class="ul" style="left:1462px;top:814.9px;width:53px"></div>
</div>
<div class="a" style="left:880px;top:476px;font-family:'Liberation Mono',monospace;font-size:16.6px;color:#d01a32;line-height:22px;z-index:5;white-space:nowrap">www.bishebang.site</div>
<svg class="a" style="left:1372px;top:802px;z-index:20" width="14" height="22" viewBox="0 0 14 22"><path d="M0.9,1.3 L0.9,17.4 L4.6,14.2 L7.6,19.6 L9.8,18.5 L7.3,13.3 L11.8,13Z" fill="#fff" stroke="#000" stroke-width="1.1" stroke-linejoin="round"/></svg>
</body></html>
